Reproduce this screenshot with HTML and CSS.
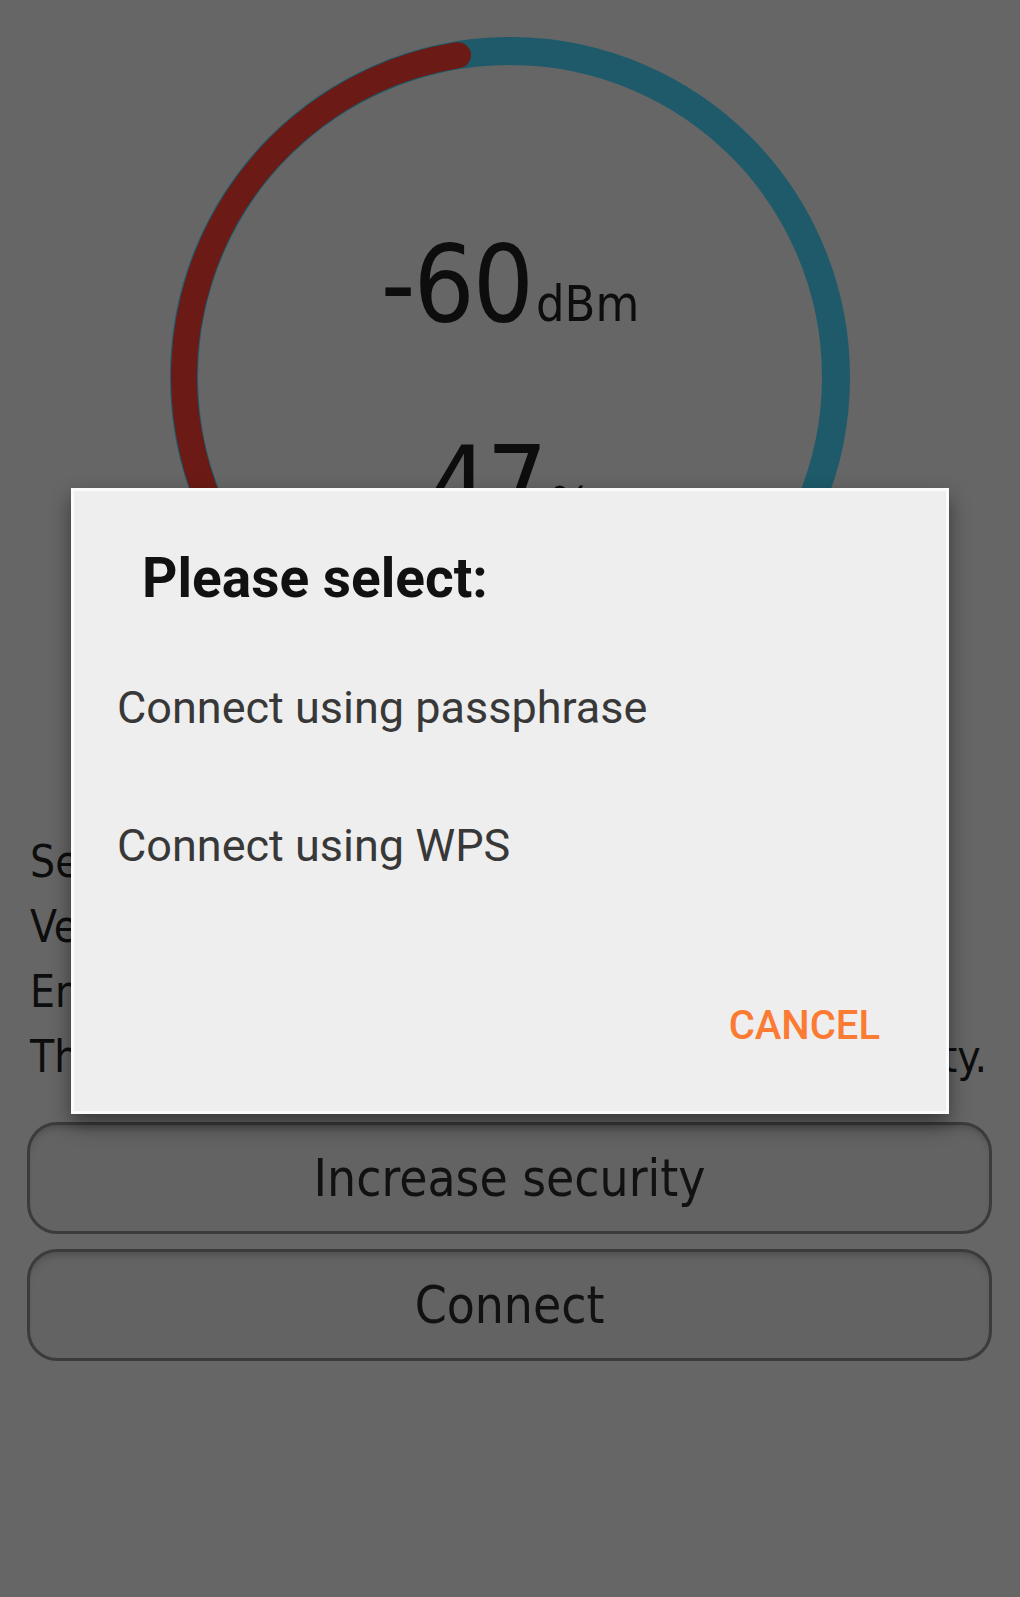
FILE: index.html
```html
<!DOCTYPE html>
<html lang="en">
<head>
  <meta charset="UTF-8">
  <meta name="viewport" content="width=device-width, initial-scale=1.0">
  <title>Network details</title>
  <link rel="stylesheet" href="styles.css">
</head>
<body>

  <div class="screen">
    <div class="gauge">
      <svg class="gauge-ring" viewBox="0 0 680 680" width="680" height="680">
        <!-- track, 270 degrees -->
        <path d="M 109.5 570.5 A 326 326 0 1 1 570.5 570.5" fill="none" stroke="#1e5a6a" stroke-width="28" stroke-linecap="round"/>
        <!-- signal level -->
        <path d="M 109.5 570.5 A 326 326 0 0 1 288 18.2" fill="none" stroke="#6c1a15" stroke-width="26" stroke-linecap="round"/>
      </svg>
      <div class="readout">
        <div class="value">-60<span class="unit">dBm</span></div>
        <div class="value">47<span class="unit">%</span></div>
      </div>
    </div>

    <div class="info">
      <p>Security: WPA2 PSK</p>
      <p>Vendor: unknown</p>
      <p>Encryption: CCMP</p>
      <p class="full">This network has a medium level of security.</p>
    </div>

    <div class="actions">
      <button class="btn">Increase security</button>
      <button class="btn">Connect</button>
    </div>
  </div>

  <div class="dialog">
    <h2>Please select:</h2>
    <ul class="choices">
      <li>Connect using passphrase</li>
      <li>Connect using WPS</li>
    </ul>
    <div class="dialog-buttons">
      <button class="text-btn">CANCEL</button>
    </div>
  </div>

</body>
</html>
```

FILE: styles.css
```css
body {
  margin: 0;
  width: 1020px;
  height: 1597px;
  position: relative;
  overflow: hidden;
  background-color: #666666;
  font-family: "DejaVu Sans Condensed", "DejaVu Sans", sans-serif;
  font-stretch: condensed;
  color: #0d0d0d;
}

.gauge {
  display: grid;
  width: 680px;
  height: 680px;
  margin: 37px auto 0;
}

.gauge-ring,
.readout {
  grid-area: 1 / 1;
}

.readout {
  display: flex;
  flex-direction: column;
  align-items: center;
  gap: 74px;
  padding-top: 194px;
}

.value {
  font-size: 107px;
  line-height: 107px;
  letter-spacing: -2px;
}

.unit {
  font-size: 50px;
  letter-spacing: 0;
  margin-left: 4px;
}

.info {
  padding: 0 33px 0 30px;
  margin-top: 112px;
}

.info p {
  margin: 0;
  font-size: 44px;
  line-height: 65px;
  white-space: nowrap;
}

.info p.full {
  text-align: justify;
  text-align-last: justify;
}

.actions {
  display: flex;
  flex-direction: column;
  gap: 15px;
  padding: 0 28px 0 27px;
  margin-top: 33px;
}

.btn {
  height: 112px;
  border: 3px solid #3b3b3b;
  border-radius: 30px;
  background-color: #636363;
  box-shadow: inset 0 7px 8px -5px rgba(0,0,0,0.25);
  font-family: inherit;
  font-stretch: condensed;
  font-size: 51px;
  color: #111;
}

.dialog {
  position: absolute;
  left: 71px;
  top: 488px;
  width: 872px;
  box-sizing: content-box;
  border: 3px solid #fbfbfb;
  background-color: #eeeeee;
  box-shadow: 0 10px 20px rgba(0,0,0,0.45);
  font-family: Roboto, "Liberation Sans", sans-serif;
  font-stretch: normal;
}

.dialog h2 {
  margin: 60px 0 0 68px;
  font-size: 55px;
  line-height: 55px;
  font-weight: 700;
  color: #111;
}

.choices {
  list-style: none;
  margin: 32px 0 0;
  padding: 0;
}

.choices li {
  height: 138px;
  display: flex;
  align-items: center;
  padding-left: 43px;
  font-size: 45px;
  color: #383838;
}

.dialog-buttons {
  display: flex;
  justify-content: flex-end;
  padding: 92px 66px 65px 0;
}

.text-btn {
  border: none;
  background: none;
  padding: 0;
  font-family: inherit;
  font-size: 40px;
  line-height: 40px;
  font-weight: 500;
  color: #fb7b34;
}
```
